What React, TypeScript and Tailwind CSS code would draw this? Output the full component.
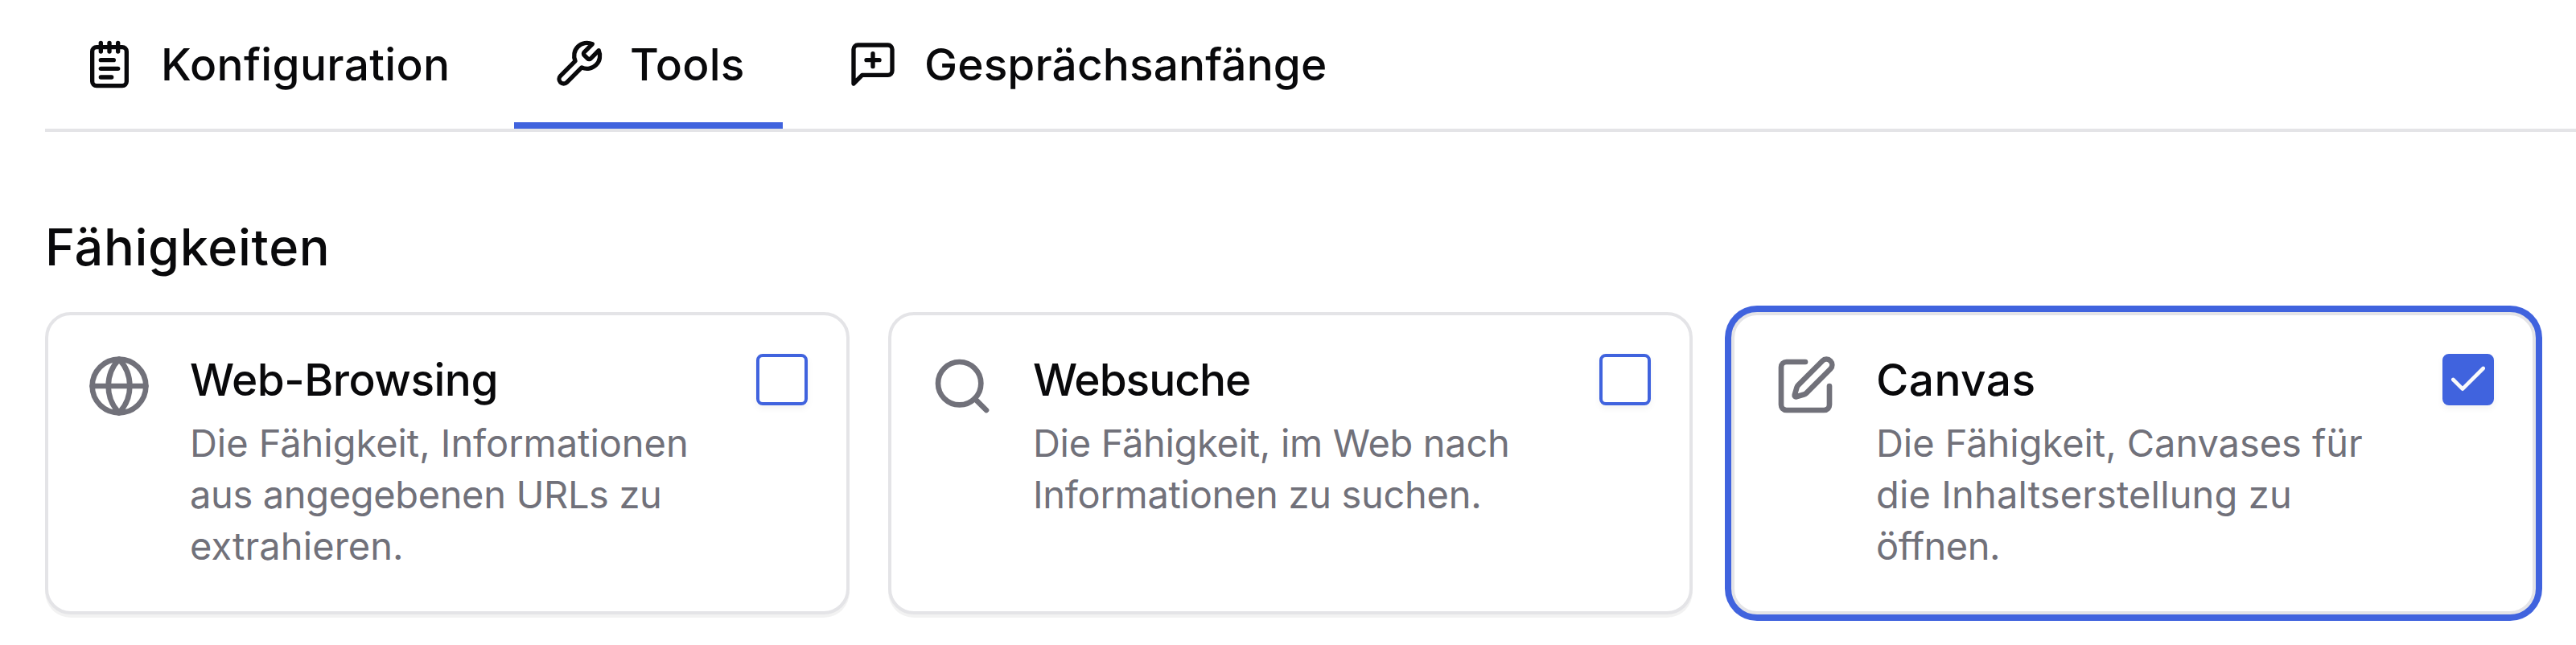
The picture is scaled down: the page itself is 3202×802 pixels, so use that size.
import type { ReactNode } from "react";
import { Check, Globe, NotepadText, Search, SquarePen } from "lucide-react";

function WrenchIcon() {
  return (
    <svg
      className="size-16 shrink-0"
      viewBox="0 0 24 24"
      fill="none"
      stroke="currentColor"
      strokeWidth={2}
      strokeLinecap="round"
      strokeLinejoin="round"
    >
      <path d="M14.7 6.3a1 1 0 0 0 0 1.4l1.6 1.6a1 1 0 0 0 1.4 0l3.77-3.77a6 6 0 0 1-7.94 7.94l-6.91 6.91a2.12 2.12 0 0 1-3-3l6.91-6.91a6 6 0 0 1 7.94-7.94l-3.76 3.76z" />
    </svg>
  );
}

function MessagePlusIcon() {
  return (
    <svg
      className="size-16 shrink-0"
      viewBox="0 0 24 24"
      fill="none"
      stroke="currentColor"
      strokeWidth={2}
      strokeLinecap="round"
      strokeLinejoin="round"
    >
      <path d="M21 15a2 2 0 0 1-2 2H7l-4 4V5a2 2 0 0 1 2-2h14a2 2 0 0 1 2 2z" />
      <path d="M12 7v6" />
      <path d="M9 10h6" />
    </svg>
  );
}

function Tab({ icon, active, className, children }: { icon: ReactNode; active?: boolean; className: string; children: ReactNode }) {
  return (
    <button
      role="tab"
      aria-selected={!!active}
      className={`flex h-40 shrink-0 items-center gap-8 border-b-8 pt-2 pl-12 text-[55px] leading-[80px] font-medium whitespace-nowrap ${
        active ? "border-[#4063de]" : "border-transparent"
      } ${className}`}
    >
      {icon}
      {children}
    </button>
  );
}

function Checkbox({ checked }: { checked?: boolean }) {
  return (
    <span
      role="checkbox"
      aria-checked={!!checked}
      className={`flex size-16 shrink-0 items-center justify-center rounded-lg border-4 border-[#4063de] shadow-[0_4px_8px_0_rgba(0,0,0,0.05)] ${
        checked ? "bg-[#4063de] text-[#fafafa]" : "bg-white"
      }`}
    >
      {checked && <Check className="size-14" strokeWidth={2} />}
    </span>
  );
}

function Card({
  icon,
  title,
  titleClass,
  lines,
  checked,
}: {
  icon: ReactNode;
  title: string;
  titleClass: string;
  lines: { text: string; className: string }[];
  checked?: boolean;
}) {
  return (
    <div
      className={`flex h-[376px] w-[1000px] shrink-0 items-start rounded-[32px] border-4 border-[#e4e4e7] bg-white p-12 ${
        checked ? "shadow-[0_0_0_8px_#4063de]" : "shadow-[0_4px_0_0_rgba(0,0,0,0.05)]"
      }`}
    >
      <div className="size-20 shrink-0 text-[#71717a]">{icon}</div>
      <div className="ml-12 flex-1">
        <h3 className={`text-[55px] leading-[64px] font-medium whitespace-nowrap ${titleClass}`}>{title}</h3>
        <p className="mt-[15px] text-[47px] leading-[64px] whitespace-nowrap text-[#71717a]">
          {lines.map((line) => (
            <span key={line.text} className={`block ${line.className}`}>
              {line.text}
            </span>
          ))}
        </p>
      </div>
      <Checkbox checked={checked} />
    </div>
  );
}

export default function App() {
  return (
    <main className="h-[802px] w-full overflow-hidden bg-white pl-14 font-['Inter',sans-serif] text-[#09090b]">
      <div role="tablist" className="flex h-[164px] gap-8 border-b-4 border-[#e4e4e7]">
        <Tab icon={<NotepadText className="size-16 shrink-0" />} className="w-[551px] tracking-[0.33px]">
          Konfiguration
        </Tab>
        <Tab icon={<WrenchIcon />} active className="w-[334px] tracking-[0.2px]">
          Tools
        </Tab>
        <Tab icon={<MessagePlusIcon />} className="tracking-[0.11px]">
          Gesprächsanfänge
        </Tab>
      </div>

      <h2 className="mt-[111px] text-[63px] leading-[64px] font-medium tracking-[0.7px]">Fähigkeiten</h2>

      <div className="mt-[49px] flex gap-12">
        <Card
          icon={<Globe className="size-20" />}
          title="Web-Browsing"
          titleClass="tracking-[-0.5px]"
          lines={[
            { text: "Die Fähigkeit, Informationen", className: "tracking-[-0.05px]" },
            { text: "aus angegebenen URLs zu", className: "tracking-[-0.36px]" },
            { text: "extrahieren.", className: "tracking-[0.09px]" },
          ]}
        />
        <Card
          icon={<Search className="size-20" />}
          title="Websuche"
          titleClass="tracking-[-1.03px]"
          lines={[
            { text: "Die Fähigkeit, im Web nach", className: "tracking-[-0.31px]" },
            { text: "Informationen zu suchen.", className: "tracking-[-0.3px]" },
          ]}
        />
        <Card
          checked
          icon={<SquarePen className="size-20" />}
          title="Canvas"
          titleClass="tracking-[0.44px]"
          lines={[
            { text: "Die Fähigkeit, Canvases für", className: "tracking-[-0.05px]" },
            { text: "die Inhaltserstellung zu", className: "tracking-[0.14px]" },
            { text: "öffnen.", className: "tracking-[-0.51px]" },
          ]}
        />
      </div>
    </main>
  );
}
